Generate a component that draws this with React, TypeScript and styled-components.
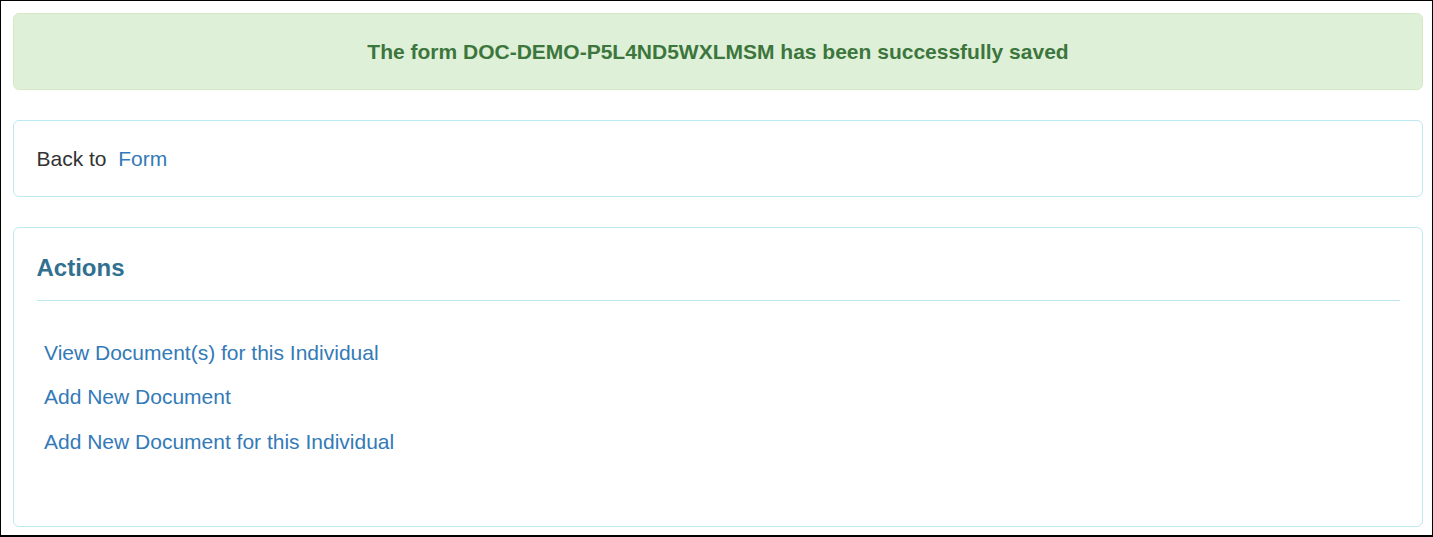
import React from 'react';
import styled, { createGlobalStyle } from 'styled-components';

const GlobalStyle = createGlobalStyle`
  html, body {
    margin: 0;
    padding: 0;
    background: #fff;
  }
  body {
    font-family: "Liberation Sans", Arial, sans-serif;
    font-size: 21px;
    line-height: 30px;
    color: #333;
  }
  * {
    box-sizing: border-box;
  }
`;

const Frame = styled.div`
  height: 537px;
  border: 1px solid #000;
  border-bottom-width: 2px;
  padding: 12px 9px 0 12px;
  overflow: hidden;
`;

const Alert = styled.div`
  background: #dff0d8;
  border: 1px solid #d6e9c6;
  border-radius: 6px;
  color: #3c763d;
  font-weight: bold;
  text-align: center;
  padding: 22.5px;
  margin-bottom: 30px;
`;

const Panel = styled.div<{ $spaced?: boolean }>`
  background: #fff;
  border: 1px solid #bce8f1;
  border-radius: 6px;
  padding: 22.5px;
  margin-bottom: ${p => (p.$spaced ? '30px' : '0')};
`;

const Link = styled.a`
  color: #337ab7;
  text-decoration: none;
  cursor: pointer;

  &:hover {
    color: #23527c;
    text-decoration: underline;
  }
`;

const Title = styled.h4`
  margin: 2px 0 17px 0;
  font-size: 24px;
  line-height: 30px;
  font-weight: bold;
  color: #31708f;
`;

const Divider = styled.hr`
  margin: 0;
  border: 0;
  border-top: 1px solid #bce8f1;
`;

const ActionList = styled.ul`
  list-style: none;
  margin: 37px 0 46.5px 0;
  padding: 0 0 0 7.5px;
  display: flex;
  flex-direction: column;
  gap: 14.5px;
`;

const ActionItem = styled.li`
  line-height: 30px;
`;

const actions = [
  'View Document(s) for this Individual',
  'Add New Document',
  'Add New Document for this Individual',
];

export default function App() {
  return (
    <>
      <GlobalStyle />
      <Frame>
        <Alert>The form DOC-DEMO-P5L4ND5WXLMSM has been successfully saved</Alert>

        <Panel $spaced>
          {'Back to\u00a0 '}
          <Link>Form</Link>
        </Panel>

        <Panel>
          <Title>Actions</Title>
          <Divider />
          <ActionList>
            {actions.map(a => (
              <ActionItem key={a}>
                <Link>{a}</Link>
              </ActionItem>
            ))}
          </ActionList>
        </Panel>
      </Frame>
    </>
  );
}
